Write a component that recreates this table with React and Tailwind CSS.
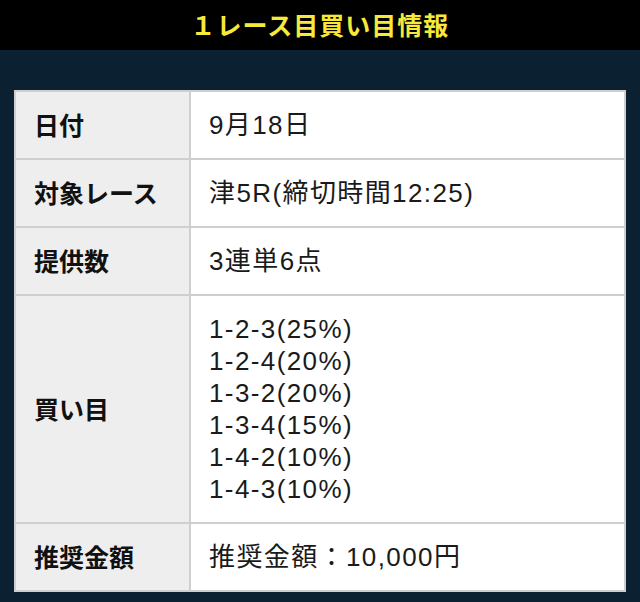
import React from "react";

const rows = [
  { label: "日付", values: ["9月18日"] },
  { label: "対象レース", values: ["津5R(締切時間12:25)"] },
  { label: "提供数", values: ["3連単6点"] },
  {
    label: "買い目",
    values: [
      "1-2-3(25%)",
      "1-2-4(20%)",
      "1-3-2(20%)",
      "1-3-4(15%)",
      "1-4-2(10%)",
      "1-4-3(10%)",
    ],
  },
  { label: "推奨金額", values: ["推奨金額：10,000円"] },
];

const App = () => {
  return (
    <div
      className="w-[640px] h-[602px] bg-[#0b2030] overflow-hidden"
      style={{ fontFamily: '"Noto Sans CJK JP", "Noto Sans", sans-serif' }}
    >
      <div className="h-[50px] bg-black flex items-center justify-center">
        <h1 className="text-[25px] font-bold text-[#f7e93a] tracking-[1px]">
          １レース目買い目情報
        </h1>
      </div>

      <div className="pt-[40px] px-[14px]">
        <table className="w-full border-collapse border-2 border-[#cfcfcf] bg-white">
          <tbody>
            {rows.map((row) => (
              <tr key={row.label}>
                <th className="w-[175px] bg-[#eeeeee] border-2 border-[#cfcfcf] text-left align-middle pl-[18px] pr-[10px] text-[25px] font-bold text-[#111]">
                  {row.label}
                </th>
                <td className="border-2 border-[#cfcfcf] pl-[18px] pr-[10px] py-[17px] text-[26px] leading-[32px] tracking-[1.4px] text-[#1a1a1a] font-['Liberation_Sans','Noto_Sans_CJK_JP',sans-serif]">
                  {row.values.map((v) => (
                    <div key={v}>{v}</div>
                  ))}
                </td>
              </tr>
            ))}
          </tbody>
        </table>
      </div>
    </div>
  );
};

export default App;
